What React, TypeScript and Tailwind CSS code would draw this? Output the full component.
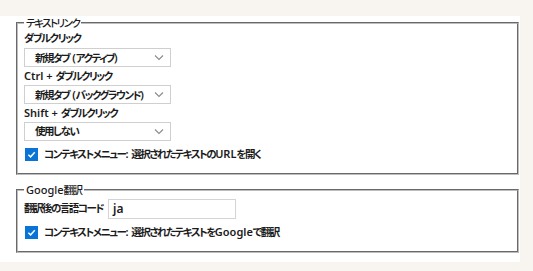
import React from "react";

const FONT = "[font-family:'Noto_Sans','Noto_Sans_CJK_JP',sans-serif] [font-feature-settings:'palt']";

// latin runs keep normal spacing, Japanese runs are tightened to match the narrow UI font
function T({ children }: { children: string }) {
  const parts = children.split(/([\x20-\x7e]+)/).filter(Boolean);
  return (
    <>
      {parts.map((p, i) =>
        /^[\x20-\x7e]+$/.test(p) ? (
          <span key={i} className="whitespace-pre text-[11px]">
            {p}
          </span>
        ) : (
          <span key={i} className="tracking-[-1.5px]">
            {p}
          </span>
        )
      )}
    </>
  );
}

function Chevron() {
  return (
    <svg className="h-[7px] w-[10px] text-[#8a8a8a]" viewBox="0 0 10 7" fill="none" stroke="currentColor" strokeWidth={1.1}>
      <path d="M1 1.5 L5 5.5 L9 1.5" />
    </svg>
  );
}

function FakeSelect({ value }: { value: string }) {
  return (
    <div className="flex h-[19px] w-[147px] items-center justify-between border border-[#cfcfcf] bg-white pl-[10px] pr-[6px]">
      <span className="whitespace-nowrap font-semibold leading-none">
        <T>{value}</T>
      </span>
      <Chevron />
    </div>
  );
}

function Check({ label }: { label: string }) {
  return (
    <div className="flex h-5 items-center gap-[6px] pl-px">
      <span className="flex h-[13px] w-[13px] items-center justify-center bg-[#0a74d6]">
        <svg className="h-[9px] w-[9px]" viewBox="0 0 10 10" fill="none" stroke="white" strokeWidth={1.6}>
          <path d="M1.5 5.2 L4 7.6 L8.6 2.4" />
        </svg>
      </span>
      <span className="whitespace-nowrap font-semibold">
        <T>{label}</T>
      </span>
    </div>
  );
}

const OPTIONS = [
  { label: "ダブルクリック", value: "新規タブ (アクティブ)" },
  { label: "Ctrl + ダブルクリック", value: "新規タブ (バックグラウンド)" },
  { label: "Shift + ダブルクリック", value: "使用しない" },
];

export default function App() {
  return (
    <div className={`h-[271px] w-[533px] bg-[#f8f5f0] pt-4 text-[10.5px] text-[#1b1b1b] ${FONT}`}>
      <div className="h-[246px] w-[520px] bg-white">
        <fieldset className="ml-4 w-[503px] border-2 border-[#bdbdbd] pb-[9px] pl-[6px] [border-style:groove]">
          <legend className="px-[2px] font-medium leading-[14px]">
            <T>テキストリンク</T>
          </legend>
          {OPTIONS.map((o) => (
            <div key={o.label}>
              <div className="flex h-[18px] items-center font-semibold">
                <span>
                  <T>{o.label}</T>
                </span>
              </div>
              <FakeSelect value={o.value} />
            </div>
          ))}
          <div className="mt-[3px]">
            <Check label="コンテキストメニュー: 選択されたテキストのURLを開く" />
          </div>
        </fieldset>

        <fieldset className="ml-4 mt-2 w-[503px] border-2 border-[#bdbdbd] pb-[9px] pl-[6px] [border-style:groove]">
          <legend className="px-[2px] font-medium leading-[14px]">
            <T>Google翻訳</T>
          </legend>
          <div className="mt-px flex h-[21px] items-center gap-[5px]">
            <span className="font-semibold">
              <T>翻訳後の言語コード</T>
            </span>
            <div className="flex h-[20px] w-[128px] items-center border border-[#d4d4d4] pl-[4px] text-[12px] font-semibold">
              ja
            </div>
          </div>
          <div className="mt-[3px]">
            <Check label="コンテキストメニュー: 選択されたテキストをGoogleで翻訳" />
          </div>
        </fieldset>
      </div>
    </div>
  );
}
